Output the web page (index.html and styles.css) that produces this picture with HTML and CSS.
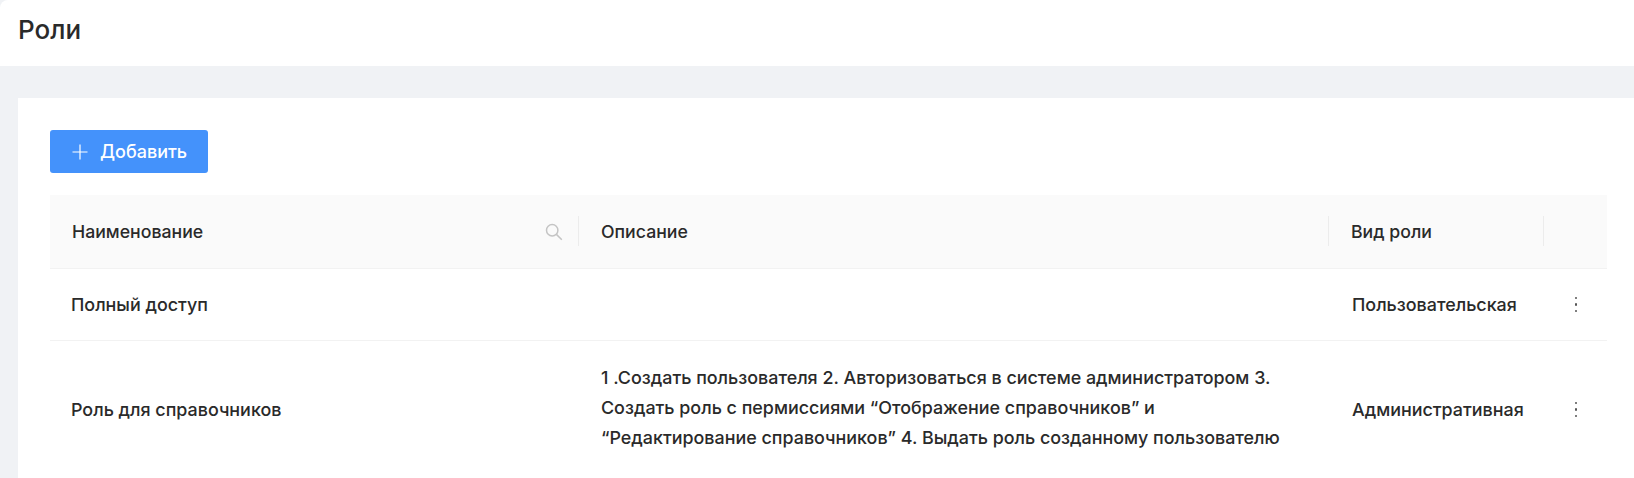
FILE: index.html
```html
<!DOCTYPE html>
<html lang="ru">
<head>
<meta charset="utf-8">
<title>Роли</title>
<link rel="stylesheet" href="styles.css">
</head>
<body>
<header class="page-header"><h1 class="page-title">Роли</h1></header>
<main class="panel">
  <button class="add-btn" type="button">
    <svg class="add-icon" viewBox="0 0 16 16" aria-hidden="true"><path d="M8 0.5v15M0.5 8h15"/></svg>
    <span>Добавить</span>
  </button>
  <div class="table">
    <div class="row head">
      <div class="cell name-head">
        <span>Наименование</span>
        <svg class="search-icon" viewBox="0 0 18 18" aria-hidden="true"><circle cx="7.2" cy="7.2" r="5.7"/><path d="M11.4 11.4l5.4 5.4"/></svg>
      </div>
      <div class="cell col-desc">Описание</div>
      <div class="cell col-kind">Вид роли</div>
      <div class="cell"></div>
    </div>
    <div class="row body">
      <div class="cell">Полный доступ</div>
      <div class="cell col-desc"></div>
      <div class="cell col-kind">Пользовательская</div>
      <div class="cell actions"><span class="dots"><i></i><i></i><i></i></span></div>
    </div>
    <div class="row body tall">
      <div class="cell">Роль для справочников</div>
      <div class="cell col-desc desc">1 .Создать пользователя 2. Авторизоваться в системе администратором 3. Создать роль с пермиссиями “Отображение справочников” и “Редактирование справочников” 4. Выдать роль созданному пользователю</div>
      <div class="cell col-kind">Административная</div>
      <div class="cell actions"><span class="dots"><i></i><i></i><i></i></span></div>
    </div>
  </div>
</main>
</body>
</html>
```
FILE: styles.css
```css
* { box-sizing: border-box; }
html, body { height: 100%; }
body {
  margin: 0;
  background: #f0f2f5;
  font-family: Inter, "Liberation Sans", sans-serif;
  color: #2a2a2a;
  overflow: hidden;
}
.page-header {
  height: 66px;
  background: #fff;
  border-top-left-radius: 8px;
  display: flex;
  align-items: center;
  padding: 0 0 6px 18px;
}
.page-title {
  margin: 0;
  font-size: 26px;
  font-weight: 500;
  line-height: 32px;
}
.panel {
  margin: 32px 0 0 18px;
  padding: 32px 27px 0 32px;
  background: #fff;
  min-height: 400px;
}
.add-btn {
  display: flex;
  align-items: center;
  gap: 12px;
  width: 158px;
  height: 43px;
  padding: 0 0 0 22px;
  border: 0;
  border-radius: 3px;
  background: #4492fb;
  color: #fff;
  font: 500 18px Inter, "Liberation Sans", sans-serif;
}
.add-icon { width: 16px; height: 16px; fill: none; stroke: #fff; stroke-width: 1.2; }
.table { margin-top: 22px; }
.row {
  display: grid;
  grid-template-columns: 528px 750px 215px 64px;
  font-size: 17.9px;
  font-weight: 500;
  line-height: 30px;
}
.cell {
  display: flex;
  align-items: center;
  padding: 0 22px;
  min-width: 0;
}
.col-desc { padding-left: 23px; }
.col-kind { padding-left: 24px; }
.head {
  height: 73px;
  background: #fafafa;
  font-size: 17.7px;
}
.head .cell { position: relative; }
.head .col-kind { padding-left: 23px; }
.head .cell + .cell::before {
  content: "";
  position: absolute;
  left: 0;
  top: 21px;
  height: 30px;
  width: 1px;
  background: #ececec;
}
.name-head { justify-content: space-between; padding-right: 15px; }
.search-icon { width: 18px; height: 18px; fill: none; stroke: #c4c4c4; stroke-width: 1.5; }
.body { height: 72px; border-top: 1px solid #f2f2f2; }
.body .cell:first-child { padding-left: 21px; }
.tall { height: auto; }
.tall .cell { min-height: 137px; }
.desc { display: block; padding-top: 22px; }
.actions { justify-content: flex-start; padding-left: 32px; }
.dots { display: flex; flex-direction: column; gap: 4px; }
.dots i { width: 2.2px; height: 2.2px; border-radius: 50%; background: #555; }
```
